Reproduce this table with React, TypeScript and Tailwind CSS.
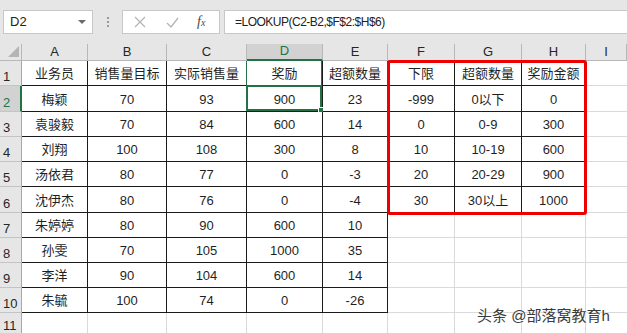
import React from "react"

const cols = ["A", "B", "C", "D", "E", "F", "G", "H", "I"]

// row data for columns A..H, rows 1..11
const rows: string[][] = [
  ["业务员", "销售量目标", "实际销售量", "奖励", "超额数量", "下限", "超额数量", "奖励金额"],
  ["梅颖", "70", "93", "900", "23", "-999", "0以下", "0"],
  ["袁骏毅", "70", "84", "600", "14", "0", "0-9", "300"],
  ["刘翔", "100", "108", "300", "8", "10", "10-19", "600"],
  ["汤依君", "80", "77", "0", "-3", "20", "20-29", "900"],
  ["沈伊杰", "80", "76", "0", "-4", "30", "30以上", "1000"],
  ["朱婷婷", "80", "90", "600", "10", "", "", ""],
  ["孙雯", "70", "105", "1000", "35", "", "", ""],
  ["李洋", "90", "104", "600", "14", "", "", ""],
  ["朱毓", "100", "74", "0", "-26", "", "", ""],
  ["", "", "", "", "", "", "", ""],
]

function isBlack(r: number, c: number) {
  // r: 1-based sheet row, c: 1-based col (A=1)
  if (c >= 1 && c <= 5 && r >= 1 && r <= 10) return true
  if (c >= 6 && c <= 8 && r >= 1 && r <= 6) return true
  return false
}

function Cell({ r, c, text }: { r: number; c: number; text: string }) {
  const black = isBlack(r, c)
  const selected = r === 2 && c === 4
  return (
    <div
      className={
        "relative flex items-end justify-center pb-[2px] border-r border-b text-[13px] leading-[18px] text-[#1f1f1f] bg-white " +
        (black ? "border-[#1a1a1a]" : "border-[#dadada]")
      }
    >
      {text}
      {selected && (
        <div className="absolute -left-[1px] -top-[1px] right-0 bottom-0 border-2 border-[#217346]">
          <div className="absolute -right-[4px] -bottom-[4px] w-[6px] h-[6px] bg-[#217346] border border-white" />
        </div>
      )}
      {r === 1 && c === 4 && (
        <div className="absolute inset-y-0 -left-[1px] right-0 border-x border-[#217346]" />
      )}
    </div>
  )
}

export default function App() {
  return (
    <div
      className="relative w-[627px] h-[333px] overflow-hidden bg-white select-none"
      style={{ fontFamily: '"Liberation Sans", "Noto Sans CJK SC", sans-serif' }}
    >
      {/* formula bar */}
      <div className="flex items-start h-[44px] pt-[10px] bg-[#e6e6e6]">
        <div className="ml-[3px] w-[90px] h-[24px] flex items-center justify-between pl-[6px] pr-[6px] bg-white border border-[#c8c8c8] text-[13px] text-[#222]">
          <span>D2</span>
          <span className="w-0 h-0 border-x-[4px] border-x-transparent border-t-[4px] border-t-[#6b6b6b]" />
        </div>
        <div className="w-[29px] h-[24px] flex flex-col items-center justify-center gap-[2px]">
          <span className="w-[2px] h-[2px] bg-[#9a9a9a]" />
          <span className="w-[2px] h-[2px] bg-[#9a9a9a]" />
          <span className="w-[2px] h-[2px] bg-[#9a9a9a]" />
        </div>
        <div className="w-[98px] h-[24px] flex items-center bg-white border border-[#c8c8c8]">
          <svg width="12" height="12" viewBox="0 0 12 12" className="ml-[11px]">
            <path d="M1 1 L11 11 M11 1 L1 11" stroke="#b4b4b4" strokeWidth="1.2" fill="none" />
          </svg>
          <svg width="13" height="11" viewBox="0 0 13 11" className="ml-[20px]">
            <path d="M1 6 L5 10 L12 1" stroke="#b4b4b4" strokeWidth="1.3" fill="none" />
          </svg>
          <span
            className="ml-[18px] text-[14px] italic text-[#4a4a4a] leading-none"
            style={{ fontFamily: '"Liberation Serif", serif' }}
          >
            f<span className="text-[10px]">x</span>
          </span>
        </div>
        <div className="ml-[4px] flex-1 -mr-[2px] h-[24px] flex items-center pl-[10px] bg-white border border-[#c8c8c8] text-[12px] tracking-[-0.5px] text-[#222]">
          =LOOKUP(C2-B2,$F$2:$H$6)
        </div>
      </div>

      {/* sheet */}
      <div className="grid grid-cols-[22px_66px_79px_80px_76px_65px_67px_67px_64px_1fr] grid-rows-[17px_25px_26px_25px_25px_25px_26px_25px_25px_25px_25px_22px]">
        {/* corner */}
        <div className="relative bg-[#e6e6e6] border-r border-b border-[#b8b8b8]">
          <div className="absolute right-[2px] bottom-[3px] w-0 h-0 border-l-[11px] border-l-transparent border-b-[11px] border-b-[#b4b4b4]" />
        </div>
        {cols.map((l) => (
          <div
            key={l}
            className={
              "flex items-end justify-center text-[13px] leading-[16px] border-r " +
              (l === "D"
                ? "bg-[#d2d2d2] text-[#217346] border-b-2 border-b-[#217346] border-r-[#b8b8b8]"
                : "bg-[#e6e6e6] text-[#262626] border-b border-[#b8b8b8]")
            }
          >
            {l}
          </div>
        ))}

        {rows.map((row, i) => {
          const r = i + 1
          return (
            <React.Fragment key={r}>
              <div
                className={
                  "flex items-end pl-[3px] text-[13px] leading-[16px] border-b " +
                  (r === 2
                    ? "bg-[#d2d2d2] text-[#217346] border-r-2 border-r-[#217346] border-b-[#c4c4c4]"
                    : "bg-[#e6e6e6] text-[#262626] border-r border-r-[#a8a8a8] border-b-[#c4c4c4]")
                }
              >
                {r}
              </div>
              {row.map((t, j) => (
                <Cell key={j} r={r} c={j + 1} text={t} />
              ))}
              <div className="bg-white border-b border-[#dadada]" />
            </React.Fragment>
          )
        })}
      </div>

      {/* red annotation box */}
      <div className="absolute left-[387px] top-[60px] w-[200px] h-[155px] border-[3px] border-[#ee0000] rounded-[3px]" />

      {/* watermark */}
      <div
        className="absolute left-[477px] top-[305px] text-[15px] text-[#3a3a3a]"
        style={{ textShadow: "0 0 2px #fff, 0 0 2px #fff" }}
      >
        头条 @部落窝教育h
      </div>
    </div>
  )
}
